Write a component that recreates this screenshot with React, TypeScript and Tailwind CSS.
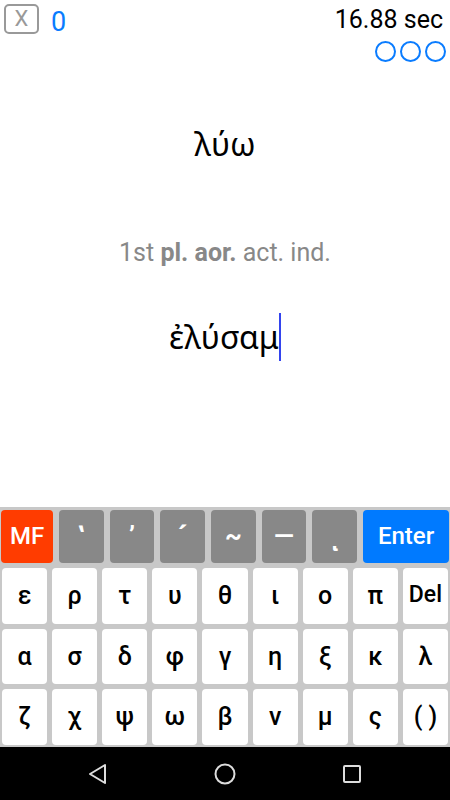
import { ReactNode } from 'react';

const row2 = ['ε', 'ρ', 'τ', 'υ', 'θ', 'ι', 'ο', 'π', 'Del'];
const row3 = ['α', 'σ', 'δ', 'φ', 'γ', 'η', 'ξ', 'κ', 'λ'];
const row4 = ['ζ', 'χ', 'ψ', 'ω', 'β', 'ν', 'μ', 'ς', '( )'];
const accents = ['\u02BD', '\u02BC', '\u02CA', '~', '\u2014', '\u037A'];

function Key({ children, className }: { children: ReactNode; className?: string }) {
    return (
        <div className={`flex items-center justify-center rounded-[4px] ${className ?? ''}`}>
            {children}
        </div>
    );
}

export default function App() {
    return (
        <div className="w-[450px] h-[800px] flex flex-col bg-white overflow-hidden" style={{ fontFamily: 'Roboto, "Noto Sans", sans-serif' }}>
            {/* top bar */}
            <div className="flex justify-between px-[4px] pt-[4px] h-[64px]">
                <div className="flex items-start gap-[12px]">
                    <div className="w-[35px] h-[30px] border-2 border-[#999] rounded-[5px] flex items-center justify-center text-[#999] text-[22px] leading-none">
                        X
                    </div>
                    <div className="text-[#0a7cff] text-[27px] leading-none pt-[5px]">0</div>
                </div>
                <div className="flex flex-col items-end">
                    <div className="text-black text-[25px] leading-none pt-[3px] pr-[3px]">16.88 sec</div>
                    <div className="flex gap-[4px] mt-[9px]">
                        <div className="w-[21px] h-[21px] rounded-full border-[2.5px] border-[#0a7cff]" />
                        <div className="w-[21px] h-[21px] rounded-full border-[2.5px] border-[#0a7cff]" />
                        <div className="w-[21px] h-[21px] rounded-full border-[2.5px] border-[#0a7cff]" />
                    </div>
                </div>
            </div>

            {/* prompt */}
            <div className="flex-1 flex flex-col items-center">
                <div className="mt-[60px] text-[32px] leading-[40px] text-black" style={{ fontFamily: '"Noto Sans", sans-serif' }}>λύω</div>
                <div className="mt-[73px] text-[25px] leading-[32px] text-[#888]">
                    1st <b>pl. aor.</b> act. ind.
                </div>
                <div className="mt-[44px] flex items-center">
                    <span className="text-[32px] leading-[40px] text-black" style={{ fontFamily: '"Noto Sans", sans-serif' }}>ἐλύσαμ</span>
                    <span className="w-[2px] h-[48px] bg-[#3344ee]" />
                </div>
            </div>

            {/* keyboard */}
            <div className="bg-[#c8c8c8] px-[1px] pt-[3px] pb-[2px] flex flex-col gap-[5px] h-[240px]">
                <div className="flex gap-[6px] h-[53px]">
                    <Key className="w-[52px] bg-[#ff3c00] text-white text-[24px] font-medium">MF</Key>
                    {accents.map((a, i) => (
                        <Key key={i} className="flex-1 bg-[#888] text-white text-[26px] font-bold">
                            {a}
                        </Key>
                    ))}
                    <Key className="w-[86px] bg-[#007aff] text-white text-[24px] font-medium">Enter</Key>
                </div>
                {[row2, row3, row4].map((row, r) => (
                    <div key={r} className="grid grid-cols-9 gap-[5px] px-[1px] h-[56px]">
                        {row.map((k) => (
                            <Key key={k} className={`bg-white text-black font-medium ${k === 'Del' ? 'text-[23px]' : 'text-[25px]'}`}>
                                {k}
                            </Key>
                        ))}
                    </div>
                ))}
            </div>

            {/* nav bar */}
            <div className="bg-black h-[53px] flex items-center justify-center gap-[87px]">
                <div className="w-[40px] flex justify-center">
                    <svg width="20" height="22" viewBox="0 0 20 22" fill="none" stroke="#ddd" strokeWidth="2" strokeLinejoin="round">
                        <path d="M17 2 L2 11 L17 20 Z" />
                    </svg>
                </div>
                <div className="w-[40px] flex justify-center">
                    <svg width="22" height="22" viewBox="0 0 22 22" fill="none" stroke="#ddd" strokeWidth="2">
                        <circle cx="11" cy="11" r="9.5" />
                    </svg>
                </div>
                <div className="w-[40px] flex justify-center">
                    <svg width="20" height="20" viewBox="0 0 20 20" fill="none" stroke="#ddd" strokeWidth="2">
                        <rect x="2" y="2" width="16" height="16" rx="1" />
                    </svg>
                </div>
            </div>
        </div>
    );
}
